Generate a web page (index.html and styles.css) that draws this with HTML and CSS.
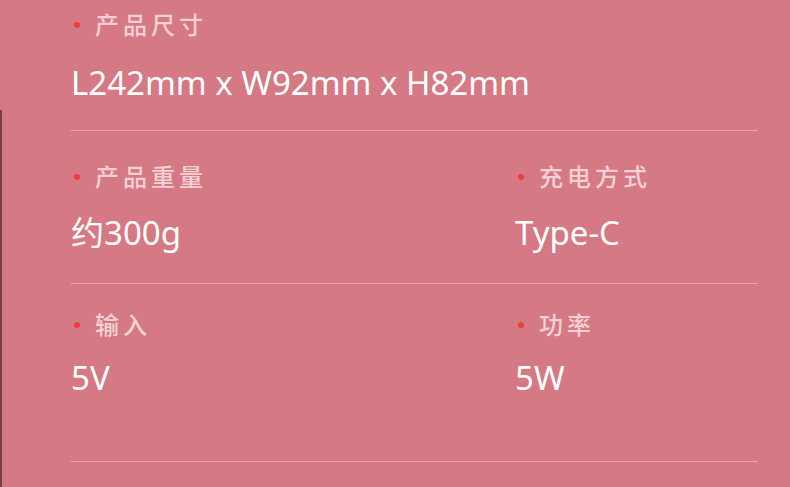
FILE: index.html
```html
<!DOCTYPE html>
<html>
  <head>
    <meta charset="utf-8">
    <title>产品参数</title>
    <link rel="stylesheet" href="styles.css">
  </head>

  <body>
    <div class="spec">
      <div class="row row-first">
        <div class="cell">
          <div class="label">产品尺寸</div>
          <div class="value">L242mm x W92mm x H82mm</div>
        </div>
      </div>
      <div class="row">
        <div class="cell">
          <div class="label">产品重量</div>
          <div class="value">约300g</div>
        </div>
        <div class="cell">
          <div class="label">充电方式</div>
          <div class="value">Type-C</div>
        </div>
      </div>
      <div class="row row-last">
        <div class="cell">
          <div class="label">输入</div>
          <div class="value">5V</div>
        </div>
        <div class="cell">
          <div class="label">功率</div>
          <div class="value">5W</div>
        </div>
      </div>
    </div>
  </body>
</html>
```

FILE: styles.css
```css
html,
body {
  margin: 0;
  height: 100%;
}

body {
  background-color: #d57984;
  color: white;
  font-family: "Noto Sans", "Noto Sans CJK SC", sans-serif;
  position: relative;
  overflow: hidden;
}

/* dark edge on the left of the picture */
body::before {
  content: "";
  position: absolute;
  left: 0;
  top: 110px;
  bottom: 0;
  width: 2px;
  background-color: #7c3e48;
}

.spec {
  width: 687px;
  margin-left: 71px;
}

.row {
  display: grid;
  grid-template-columns: 444px 1fr;
  padding: 30px 0 30px;
  border-bottom: 1px solid #eaa3ab;
}

.row-first {
  grid-template-columns: 1fr;
  padding-top: 9px;
  padding-bottom: 27px;
}

.row-last {
  padding-top: 25px;
  padding-bottom: 63px;
}

.label {
  position: relative;
  padding-left: 24px;
  font-family: "Noto Sans CJK SC", sans-serif;
  font-size: 24px;
  font-weight: 500;
  line-height: 30px;
  letter-spacing: 4px;
  color: #f5d1d5;
}

.label::before {
  content: "";
  position: absolute;
  left: 3px;
  top: 13px;
  width: 6px;
  height: 6px;
  border-radius: 50%;
  background-color: #ec3f3b;
}

.value {
  margin-top: 22px;
  font-size: 33px;
  line-height: 40px;
}

.row-first .value {
  margin-top: 24px;
}

.row-last .value {
  margin-top: 19px;
}
```
